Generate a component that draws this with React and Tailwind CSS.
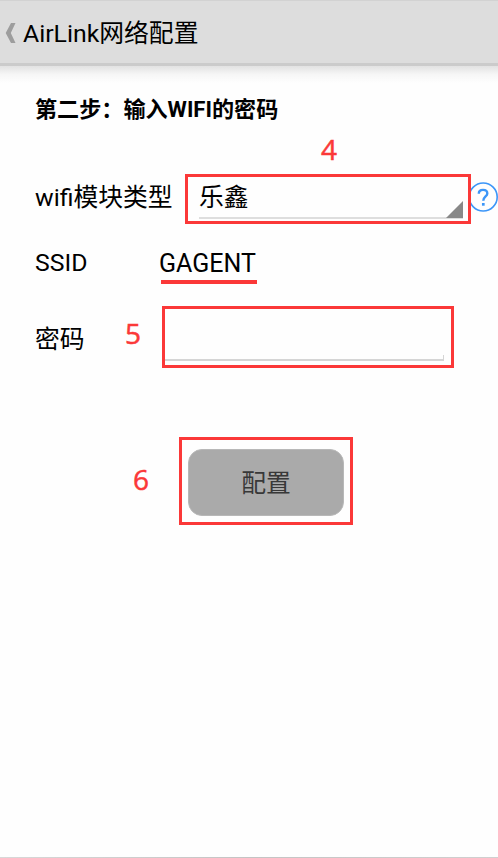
const red = 'border-[3px] border-[#fb3838]';

function Marker({ children, className }) {
  return (
    <span className={`absolute font-['Open_Sans','Noto_Sans',sans-serif] text-[28px] leading-[30px] font-medium text-[#fb3838] [-webkit-text-stroke:0.5px_#fb3838] ${className}`}>
      {children}
    </span>
  );
}

function Header() {
  return (
    <header>
      <div className="flex h-[63px] items-center border-t border-[#d2d2d2] bg-[#dddddd] pl-[5px]">
        <svg className="mt-px h-5 w-[11px]" viewBox="0 0 11 20">
          <path d="M6 0H10.5L5.8 10L10.5 20H6L0.7 10Z" fill="#9d9d9d" />
        </svg>
        <h1 className="ml-[7px] mt-[3px] text-[24.8px] leading-8 whitespace-nowrap">AirLink网络配置</h1>
      </div>
      <div className="h-[3px] bg-[#cbcbcb]" />
      <div className="h-[17px] bg-linear-to-b from-[#e2e2e2] via-[#f6f6f6] to-[#fefefe]" />
    </header>
  );
}

export default function App() {
  return (
    <div className="flex h-[858px] w-[498px] flex-col overflow-hidden bg-[#fefefe] font-['Roboto','Noto_Sans_CJK_SC',sans-serif] text-[24.8px] text-black">
      <Header />
      <main className="flex flex-1 flex-col">
        <h2 className="mt-[10px] ml-[35px] h-8 text-[22.1px] leading-8 font-bold whitespace-nowrap">第二步：输入WIFI的密码</h2>

        <section className="relative mt-[49px] flex h-[50px]">
          <Marker className="-top-[40px] left-[321px]">4</Marker>
          <label className="ml-[35px] w-[150px] leading-[48px] whitespace-nowrap">wifi模块类型</label>
          <div className={`relative z-10 h-[50px] w-[286px] pl-[11px] ${red}`}>
            <div className="flex h-[42px] w-[264px] items-end justify-between border-b-2 border-[#dedede]">
              <span className="self-start leading-[42px]">乐鑫</span>
              <svg className="-mb-[1px] h-[17px] w-[17px]" viewBox="0 0 17 17">
                <path d="M17 0V17H0Z" fill="#888888" />
              </svg>
            </div>
          </div>
          <svg className="-ml-[3px] mt-[8px] h-[30px] w-[30px] shrink-0" viewBox="0 0 30 30" fill="none" stroke="#3c96f8">
            <circle cx="15.2" cy="15" r="14" strokeWidth="1.6" />
            <path d="M10.8 11.7C10.8 9.1 12.5 7.9 15 7.9C17.7 7.9 19.3 9.4 19.3 11.5C19.3 14.4 15.3 14.7 15.3 18.8" strokeWidth="2.4" />
            <path d="M15.3 21V23.7" strokeWidth="2.7" />
          </svg>
        </section>

        <section className="mt-[22px] flex h-[38px]">
          <span className="ml-[35px] w-[124px] leading-[34px]">SSID</span>
          <div className="flex flex-col">
            <span className="h-[34px] text-[25px] leading-[36px]">GAGENT</span>
            <span className="ml-[2px] h-1 w-24 bg-[#fb3838]" />
          </div>
        </section>

        <section className="relative mt-[22px] flex h-[62px]">
          <Marker className="top-[12px] left-[125px]">5</Marker>
          <label className="ml-[35px] w-[127px] leading-[68px]">密码</label>
          <div className={`flex w-[292px] items-end pb-[4px] ${red}`}>
            <div className="h-[6px] w-[279px] border-r border-b-2 border-[#d5d5d5]" />
          </div>
        </section>

        <section className="relative mt-[69px] h-[88px]">
          <Marker className="top-[27px] left-[133px]">6</Marker>
          <div className={`ml-[179px] h-[88px] w-[174px] pt-[9px] pl-[6px] ${red}`}>
            <button className="block h-[67px] w-[156px] rounded-[14px] border border-[#b8b8b8] bg-[#aaaaaa] text-center leading-[68px] text-[#383838]">
              配置
            </button>
          </div>
        </section>
      </main>
      <footer className="h-px bg-linear-to-r from-[#d8d8d8] via-[#c4c4c4] to-[#d0d0d0]" />
    </div>
  );
}
